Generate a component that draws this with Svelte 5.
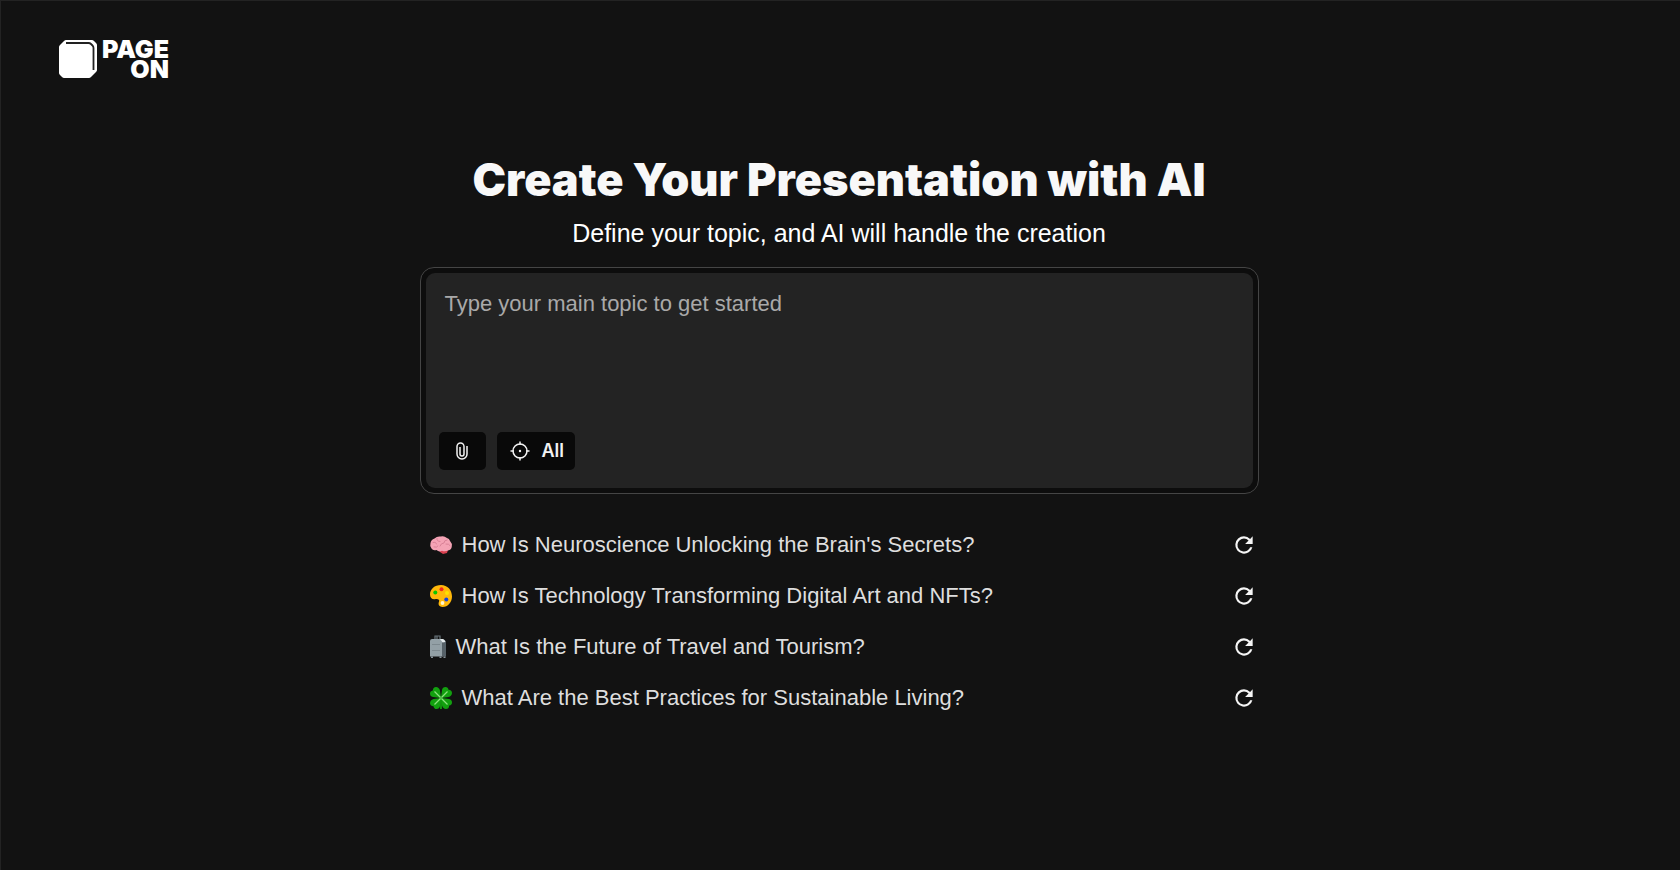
<script lang="ts">
	type Icon = 'brain' | 'palette' | 'luggage' | 'clover';

	interface Suggestion {
		icon: Icon;
		text: string;
	}

	const suggestions: Suggestion[] = [
		{ icon: 'brain', text: "How Is Neuroscience Unlocking the Brain's Secrets?" },
		{ icon: 'palette', text: 'How Is Technology Transforming Digital Art and NFTs?' },
		{ icon: 'luggage', text: 'What Is the Future of Travel and Tourism?' },
		{ icon: 'clover', text: 'What Are the Best Practices for Sustainable Living?' }
	];

	let topic = $state('');
</script>

<div class="page">
	<header>
		<a class="logo" href="/" aria-label="PageOn home">
			<svg class="cube" viewBox="0 0 38 38" aria-hidden="true">
				<path d="M7 0h26q1 0 2 1l2 2q1 1 1 2v25q0 1-1 2l-5 5q-1 1-2 1H5q-1 0-2-1l-2-2q-1-1-1-2V7q0-1 1-2l4-4q1-1 2-1z" fill="#fff" />
				<path d="M7 3h22.500q1.500 0 2.500 1l1.500 1.500q1 1 1 2.500v22" fill="none" stroke="#222" stroke-width="1.800" />
			</svg>
			<span class="wordmark"><span>PAGE</span><span>ON</span></span>
		</a>
	</header>

	<main>
		<h1>Create Your Presentation with AI</h1>
		<p class="subtitle">Define your topic, and AI will handle the creation</p>

		<form class="composer" onsubmit={(e) => e.preventDefault()}>
			<div class="composer-inner">
				<textarea
					bind:value={topic}
					aria-label="Main topic"
					placeholder="Type your main topic to get started"
				></textarea>
				<div class="tools">
					<button type="button" class="tool attach" aria-label="Attach a file">
						<svg width="12" height="18" viewBox="0 0 12 18" aria-hidden="true">
							<path
								d="M11 4v8a5 5 0 0 1-10 0V4.500a3.500 3.500 0 0 1 7 0V12a2 2 0 0 1-4 0V5"
								fill="none"
								stroke="currentColor"
								stroke-width="1.500"
							/>
						</svg>
					</button>
					<button type="button" class="tool scope">
						<svg width="20" height="20" viewBox="0 0 20 20" aria-hidden="true">
							<circle cx="10" cy="10" r="7" fill="none" stroke="currentColor" stroke-width="1.500" />
							<circle cx="10" cy="10" r="1.200" fill="currentColor" />
							<path d="M10 .5v3.500M10 16v3.500M.5 10h3.500M16 10h3.500" stroke="currentColor" stroke-width="1.500" />
						</svg>
						All
					</button>
				</div>
			</div>
		</form>

		<ul>
			{#each suggestions as item (item.icon)}
				<li>
					<button type="button" class="suggestion">
						{#if item.icon === 'brain'}
							<svg width="24" height="24" viewBox="0 0 24 24" aria-hidden="true">
								<path d="M10 17q4-1 9 0l-1 3-4 1-3-2z" fill="#d9404f" />
								<path
									d="M2.500 15.500Q.5 13 1.500 10 2 6.500 5.500 5.500 8 3 11.500 3.500q4-1 6 1.300 3 .7 3.700 3.400 2.300 2.300 1.600 5.300-.3 3.500-3.800 4-3 1.500-6 .2-3 1.700-5.500-.7-3.500 1-5-1.500z"
									fill="#f4a3b5"
								/>
								<path
									d="M4 9.500q3-1 3.500 1.500M8 5.500q-.5 3 3 3M18 7q-3 0-3 3-3 0-4 3M17 11q3-.5 4 1.500M5 14q3 1 4-1"
									fill="none"
									stroke="#d98297"
									stroke-width="1"
									stroke-linecap="round"
								/>
							</svg>
						{:else if item.icon === 'palette'}
							<svg width="24" height="24" viewBox="0 0 24 24" aria-hidden="true">
								<path
									d="M12 1C5.500 1 1 5.200 1 10.500 1 14 3 15.500 6 15.200c3-.4 5 .3 4 2.600-1.300 3 .5 5.200 3.500 5.200C19 23 23 18 23 12.500 23 6 18.500 1 12 1z"
									fill="#ffb80a"
								/>
								<circle cx="6.300" cy="8.500" r="2" fill="#0ac800" />
								<circle cx="12.500" cy="5.300" r="2" fill="#ef2a20" />
								<circle cx="18" cy="9" r="2" fill="#ffe100" />
								<circle cx="17.300" cy="15.500" r="2" fill="#1443db" />
								<circle cx="13.500" cy="19" r="1.900" fill="#fff5cf" />
							</svg>
						{:else if item.icon === 'luggage'}
							<svg width="18" height="24" viewBox="0 0 18 24" aria-hidden="true">
								<path d="M6 4V1h5v3M8 1v3" fill="none" stroke="#69757b" stroke-width="1.200" />
								<path d="M1 6q0-2 2-2h9.500L14 7v14.500H1z" fill="#93a0a6" />
								<path d="M12 4h2q3 1 3 4v13.500h-4V7z" fill="#566168" />
								<path d="M11 4h3q2 1 2.500 3l-3 .5z" fill="#e4eaed" />
								<path d="M3 9.500h8M3 15.500h8" stroke="#7d898f" stroke-width="1" />
								<path d="M2 21.500h2V23H2zM10.500 21.500h2V23h-2zM14.500 21.500h2V23h-2z" fill="#87939a" />
							</svg>
						{:else}
							<svg width="24" height="24" viewBox="0 0 24 24" aria-hidden="true">
								<path d="M12 12v11" stroke="#12a00f" stroke-width="1.800" />
								{#each [0, 90, 180, 270] as angle}
									<g transform="rotate({angle} 12 12)">
										<path
											d="M12 12 4 11Q1 10.500 1 7.500 1 5 3.800 4.500 4 1 7 1q3 .2 4 3.500z"
											fill="#12a00f"
										/>
										<path d="M11.500 11.500 5.500 5.500" stroke="#8ce37e" stroke-width="1.200" />
									</g>
								{/each}
							</svg>
						{/if}
						<span>{item.text}</span>
					</button>
					<button type="button" class="refresh" aria-label="Refresh suggestion">
						<svg width="26" height="26" viewBox="0 0 24 24" aria-hidden="true">
							<path
								d="M17.650 6.350A7.960 7.960 0 0 0 12 4a8 8 0 1 0 7.730 10h-2.080A6 6 0 1 1 12 6c1.660 0 3.140.690 4.220 1.780L13 11h7V4z"
								fill="currentColor"
							/>
						</svg>
					</button>
				</li>
			{/each}
		</ul>
	</main>
</div>

<style>
	:global(body) {
		background: #121212;
	}

	.page {
		box-sizing: border-box;
		min-height: 100vh;
		padding-right: 3px;
		border-top: 1px solid #232323;
		border-left: 1px solid #232323;
		background: #121212;
		color: #fff;
		font-family: 'Liberation Sans', Arial, sans-serif;
	}

	header {
		display: flex;
		padding: 38px 58px 0;
	}

	.logo {
		display: flex;
		align-items: center;
		gap: 5px;
		height: 40px;
		color: #fff;
		text-decoration: none;
	}

	.cube {
		width: 38px;
		height: 38px;
	}

	.wordmark {
		display: flex;
		flex-direction: column;
		align-items: flex-end;
		font: 900 25px/20px Inter, sans-serif;
	}

	main {
		box-sizing: border-box;
		width: 100%;
		max-width: 839px;
		margin: 0 auto;
		padding-top: 75px;
	}

	h1 {
		margin: 0;
		font: 900 45px/52px Inter, sans-serif;
		color: #f8f8f8;
		text-align: center;
	}

	.subtitle {
		margin: 11px 0 18px;
		font-size: 25px;
		line-height: 32px;
		text-align: center;
	}

	.composer {
		padding: 5px;
		border: 1px solid #454545;
		border-radius: 14px;
		background: #0d0d0d;
	}

	.composer-inner {
		padding: 13px;
		border-radius: 9px;
		background: #232323;
	}

	.composer-inner:focus-within {
		background: #262626;
	}

	textarea {
		display: block;
		box-sizing: border-box;
		width: 100%;
		height: 146px;
		padding: 4px 6px;
		border: none;
		outline: none;
		resize: none;
		background: transparent;
		color: #e6e6e6;
		font: 22px/28px 'Liberation Sans', Arial, sans-serif;
	}

	textarea::placeholder {
		color: #a9a9a9;
		opacity: 1;
	}

	.tools {
		display: flex;
		gap: 11px;
		padding-bottom: 5px;
	}

	button {
		border: none;
		cursor: pointer;
	}

	.tool {
		display: flex;
		align-items: center;
		justify-content: center;
		height: 38px;
		border-radius: 5px;
		background: #090909;
		color: #f2f2f2;
		font: 600 18px/24px Inter, sans-serif;
	}

	.attach {
		width: 47px;
		padding: 0;
	}

	.scope {
		gap: 12px;
		padding: 0 11px 0 13px;
	}

	.tool:hover {
		background: #000;
	}

	ul {
		display: flex;
		flex-direction: column;
		gap: 23px;
		margin: 0;
		padding: 37px 2px 0 9px;
		list-style: none;
	}

	li {
		display: flex;
		align-items: center;
		justify-content: space-between;
	}

	.suggestion {
		display: flex;
		align-items: center;
		gap: 9px;
		padding: 0;
		background: none;
		color: #dedede;
		font: 22px/28px 'Liberation Sans', Arial, sans-serif;
		text-align: left;
	}

	.suggestion:hover {
		color: #fff;
	}

	.suggestion svg {
		flex: none;
	}

	.refresh {
		display: flex;
		padding: 0;
		background: none;
		color: #f5f5f5;
	}
</style>
